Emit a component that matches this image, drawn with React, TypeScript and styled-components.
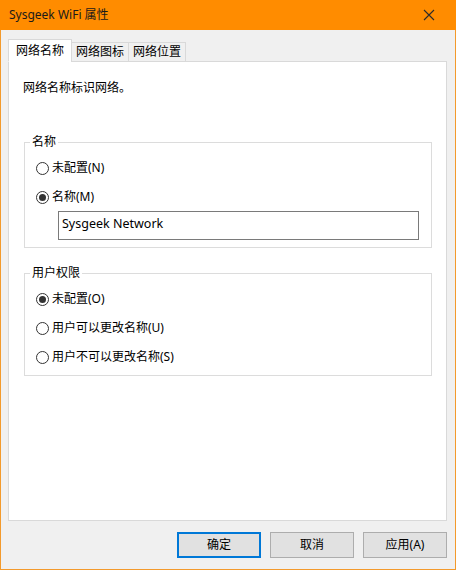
import React from 'react'
import styled, { createGlobalStyle } from 'styled-components'

const GlobalStyle = createGlobalStyle`
  html, body {
    margin: 0;
    padding: 0;
    background: #ffffff;
  }
  body {
    font-family: "Noto Sans", "Noto Sans CJK SC", sans-serif;
    font-size: 12px;
    color: #000;
  }
`

const Window = styled.div`
  width: 456px;
  height: 570px;
  box-sizing: border-box;
  display: flex;
  flex-direction: column;
  background: #f0f0f0;
  border: 1px solid #f39a2c;
  border-top: none;
`

const TitleBar = styled.div`
  height: 30px;
  margin: 0 -1px;
  background: #ff8c00;
  display: flex;
  align-items: center;
  justify-content: space-between;
  padding: 0 21px 0 9px;
  flex-shrink: 0;
`

const Title = styled.span`
  font-size: 12px;
  line-height: 16px;
  color: #1a1a1a;
`

const CloseButton = styled.span`
  display: flex;
  width: 12px;
  height: 12px;
`

const Body = styled.div`
  flex: 1;
  display: flex;
  flex-direction: column;
  padding: 9px 8px 11px 7px;
  min-height: 0;
`

const TabRow = styled.div`
  display: flex;
  align-items: flex-end;
  height: 23px;
  margin-bottom: -1px;
  position: relative;
  z-index: 1;
`

const Tab = styled.div<{ $active?: boolean }>`
  box-sizing: border-box;
  height: ${p => (p.$active ? '23px' : '20px')};
  padding: ${p => (p.$active ? '0 7px' : '0 4px')};
  display: flex;
  align-items: center;
  background: ${p => (p.$active ? '#ffffff' : '#f0f0f0')};
  border: 1px solid #d9d9d9;
  border-bottom: ${p => (p.$active ? '1px solid #ffffff' : '1px solid #d9d9d9')};
  margin-left: ${p => (p.$active ? '0' : '-1px')};
  line-height: 16px;
  white-space: nowrap;
  &:first-child {
    margin-left: 0;
  }
`

const Panel = styled.div`
  flex: 1;
  background: #ffffff;
  border: 1px solid #d9d9d9;
  padding: 18px 14px 0 14px;
  min-height: 0;
`

const Description = styled.div`
  line-height: 16px;
`

const Group = styled.fieldset<{ $gap: number }>`
  margin: ${p => p.$gap}px 0 0 1px;
  padding: 0;
  border: 1px solid #dcdcdc;
  min-width: 0;
`

const Legend = styled.legend`
  margin-left: 5px;
  padding: 0 2px;
  line-height: 16px;
`

const GroupBody = styled.div<{ $top: number; $bottom: number }>`
  display: flex;
  flex-direction: column;
  gap: 13px;
  padding: ${p => p.$top}px 12px ${p => p.$bottom}px 11px;
`

const RadioRow = styled.label`
  display: flex;
  align-items: center;
  height: 16px;
  line-height: 16px;
  white-space: nowrap;
`

const RadioCircle = styled.span<{ $checked?: boolean }>`
  box-sizing: border-box;
  width: 13px;
  height: 13px;
  border-radius: 50%;
  border: 1px solid #333333;
  background: #ffffff;
  margin-right: 3px;
  display: flex;
  align-items: center;
  justify-content: center;
  flex-shrink: 0;
  &::after {
    content: '';
    display: ${p => (p.$checked ? 'block' : 'none')};
    width: 7px;
    height: 7px;
    border-radius: 50%;
    background: #333333;
  }
`

const TextBox = styled.div`
  box-sizing: border-box;
  height: 29px;
  margin: -7px 0 0 22px;
  border: 1px solid #7a7a7a;
  background: #ffffff;
  padding: 4px 4px 0 3px;
  font-size: 12.5px;
  line-height: 16px;
`

const Footer = styled.div`
  height: 26px;
  margin-top: 11px;
  display: flex;
  justify-content: flex-end;
  gap: 9px;
  flex-shrink: 0;
`

const Button = styled.div<{ $default?: boolean }>`
  box-sizing: border-box;
  width: 84px;
  height: 26px;
  display: flex;
  align-items: center;
  justify-content: center;
  background: #e1e1e1;
  border: ${p => (p.$default ? '2px solid #0078d7' : '1px solid #adadad')};
  line-height: 16px;
`

function Radio({ label, checked }: { label: string; checked?: boolean }) {
  return (
    <RadioRow>
      <RadioCircle $checked={checked} />
      {label}
    </RadioRow>
  )
}

export default function App() {
  return (
    <>
      <GlobalStyle />
      <Window>
        <TitleBar>
          <Title>Sysgeek WiFi 属性</Title>
          <CloseButton>
            <svg width="12" height="12" viewBox="0 0 12 12">
              <path d="M1 1 L11 11 M11 1 L1 11" stroke="#2b2b2b" strokeWidth="1.1" />
            </svg>
          </CloseButton>
        </TitleBar>
        <Body>
          <TabRow>
            <Tab $active>网络名称</Tab>
            <Tab>网络图标</Tab>
            <Tab>网络位置</Tab>
          </TabRow>
          <Panel>
            <Description>网络名称标识网络。</Description>
            <Group $gap={38}>
              <Legend>名称</Legend>
              <GroupBody $top={10} $bottom={7}>
                <Radio label="未配置(N)" />
                <Radio label="名称(M)" checked />
                <TextBox>Sysgeek Network</TextBox>
              </GroupBody>
            </Group>
            <Group $gap={17}>
              <Legend>用户权限</Legend>
              <GroupBody $top={10} $bottom={10}>
                <Radio label="未配置(O)" checked />
                <Radio label="用户可以更改名称(U)" />
                <Radio label="用户不可以更改名称(S)" />
              </GroupBody>
            </Group>
          </Panel>
          <Footer>
            <Button $default>确定</Button>
            <Button>取消</Button>
            <Button>应用(A)</Button>
          </Footer>
        </Body>
      </Window>
    </>
  )
}
